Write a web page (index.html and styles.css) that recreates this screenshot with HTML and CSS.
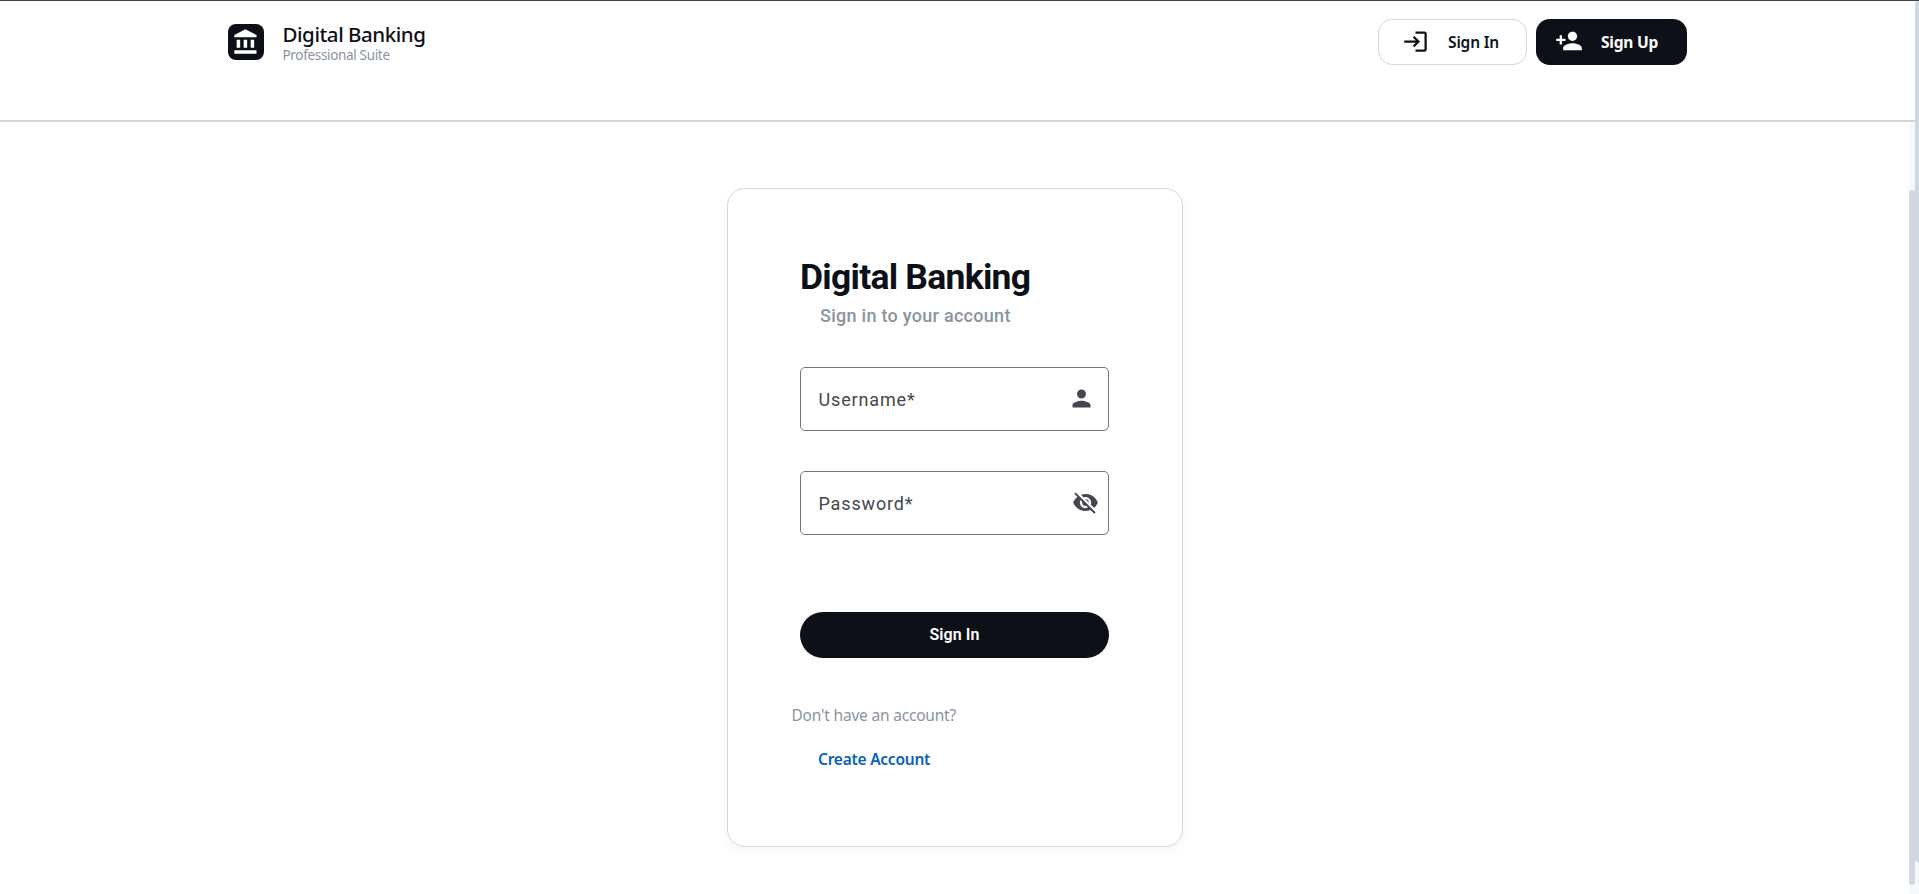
FILE: index.html
```html
<!DOCTYPE html>
<html lang="en">
<head>
<meta charset="utf-8">
<title>Digital Banking</title>
<link rel="stylesheet" href="styles.css">
</head>
<body>
<div class="app">
  <div class="page">
    <header class="header">
      <div class="brand">
        <div class="brand-logo">
          <svg viewBox="0 0 24 24" width="28" height="28"><path d="M4 10v7h3v-7H4zm6 0v7h3v-7h-3zM2 22h19v-3H2v3zm14-12v7h3v-7h-3zm-4.500-9L2 6v2h19V6l-9.500-5z"/></svg>
        </div>
        <div class="brand-text">
          <span class="brand-name">Digital Banking</span>
          <span class="brand-sub">Professional Suite</span>
        </div>
      </div>
      <nav class="actions">
        <button class="btn btn-outline">
          <svg viewBox="0 0 24 24" width="27" height="27"><path d="M11 7 9.6 8.4l2.6 2.6H2v2h10.2l-2.6 2.6L11 17l5-5-5-5zm9 12h-8v2h8c1.1 0 2-.9 2-2V5c0-1.100-.9-2-2-2h-8v2h8v14z"/></svg>
          <span class="in-label">Sign In</span>
        </button>
        <button class="btn btn-dark">
          <svg viewBox="0 0 24 24" width="28" height="28"><path d="M15 12c2.21 0 4-1.79 4-4s-1.79-4-4-4-4 1.79-4 4 1.79 4 4 4zm-9-2V7H4v3H1v2h3v3h2v-3h3v-2H6zm9 4c-2.67 0-8 1.34-8 4v2h16v-2c0-2.66-5.33-4-8-4z"/></svg>
          <span class="up-label">Sign Up</span>
        </button>
      </nav>
    </header>
    <div class="body-row">
      <main class="content">
        <section class="card">
          <h1 class="title">Digital Banking</h1>
          <p class="subtitle">Sign in to your account</p>
          <form class="form">
            <div class="field">
              <label class="field-label">Username*</label>
              <svg class="icon-user" viewBox="0 0 24 24" width="27" height="27"><path d="M12 12c2.21 0 4-1.79 4-4s-1.79-4-4-4-4 1.79-4 4 1.79 4 4 4zm0 2c-2.67 0-8 1.34-8 4v2h16v-2c0-2.66-5.33-4-8-4z"/></svg>
            </div>
            <div class="field">
              <label class="field-label">Password*</label>
              <svg class="icon-eye" viewBox="0 0 24 24" width="27" height="27"><path d="M12 7c2.76 0 5 2.24 5 5 0 .65-.13 1.26-.36 1.83l2.92 2.92c1.51-1.26 2.7-2.89 3.43-4.75-1.73-4.39-6-7.5-11-7.5-1.4 0-2.74.25-3.98.7l2.16 2.16C10.74 7.13 11.35 7 12 7zM2 4.27l2.28 2.28.46.46C3.08 8.3 1.78 10.02 1 12c1.73 4.39 6 7.5 11 7.5 1.55 0 3.03-.3 4.38-.84l.42.42L19.73 22 21 20.73 3.27 3 2 4.27zM7.53 9.8l1.55 1.55c-.05.21-.08.43-.08.65 0 1.66 1.34 3 3 3 .22 0 .44-.03.65-.08l1.55 1.55c-.67.33-1.41.53-2.2.53-2.76 0-5-2.24-5-5 0-.79.2-1.53.53-2.2zm4.31-.78 3.15 3.15.02-.16c0-1.66-1.34-3-3-3l-.17.01z"/></svg>
            </div>
            <button class="submit" type="button">Sign In</button>
          </form>
          <p class="prompt">Don't have an account?</p>
          <a class="create">Create Account</a>
        </section>
      </main>
      <div class="track inner-track"><div class="inner-thumb"></div></div>
    </div>
  </div>
  <div class="track outer-track"><div class="outer-thumb"></div></div>
</div>
</body>
</html>
```
FILE: styles.css
```css
* { box-sizing: border-box; }
body { margin: 0; background: #fff; font-family: "Noto Sans", sans-serif; color: #0d1117; }
h1, p { margin: 0; }
svg { display: block; fill: currentColor; flex: none; }
button { font-family: inherit; margin: 0; padding: 0; border: 0; }
span, label, h1, p, a { white-space: nowrap; }
.app { display: flex; height: 894px; border-top: 1px solid #444446; overflow: hidden; }
.page { flex: 1; display: flex; flex-direction: column; }
.header { height: 121px; padding: 18px 228px 0; border-bottom: 2px solid #ced5df; display: flex; justify-content: space-between; align-items: flex-start; }
.brand { display: flex; gap: 18.5px; padding-top: 5px; }
.brand-logo { width: 36px; height: 36px; border-radius: 8px; background: #0d1117; color: #fff; display: grid; place-items: center; }
.brand-text { display: flex; flex-direction: column; margin-top: -2px; }
.brand-name { font-size: 20.5px; line-height: 24px; font-weight: 500; letter-spacing: -0.45px; }
.brand-sub { font-size: 13.5px; line-height: 19px; color: #8b949e; letter-spacing: -0.33px; }
.actions { display: flex; gap: 9px; }
.btn { height: 46px; border-radius: 14px; display: flex; align-items: center; font-size: 15.5px; font-weight: 600; }
.btn-outline { width: 149px; padding-left: 23px; gap: 19px; background: #fff; color: #0d1117; border: 1px solid #d0d7de; letter-spacing: -0.15px; }
.btn-dark { width: 151px; padding-left: 19px; gap: 18px; background: #0d1117; color: #fff; font-weight: 700; letter-spacing: -0.2px; }
.btn svg { margin-bottom: 2px; }
.body-row { flex: 1; display: flex; }
.content { flex: 1; padding: 66px 0 0 727px; }
.card { width: 456px; height: 659px; padding: 68px 73px 0 72px; border: 1px solid #d0d7de; border-radius: 18px; background: #fff; box-shadow: 0 4px 12px rgba(0,0,0,.04); }
.title { font: 700 35.5px/40px Roboto, sans-serif; letter-spacing: -0.75px; }
.subtitle { font: 500 18px/24px Roboto, sans-serif; color: #8b949e; letter-spacing: 0.28px; padding-left: 20px; margin-top: 7px; }
.form { margin-top: 39px; display: flex; flex-direction: column; }
.field { height: 64px; border: 1px solid #74777f; border-radius: 5px; display: flex; align-items: center; justify-content: space-between; padding-left: 17.5px; margin-bottom: 40px; font: 400 18px/24px Roboto, sans-serif; color: #44474e; letter-spacing: 0.85px; }
.field-label { padding-top: 2px; }
.field svg { margin-bottom: 1px; }
.icon-user { margin-right: 13.5px; }
.icon-eye { margin-right: 9px; }
.submit { height: 46px; margin-top: 37px; border-radius: 23px; background: #0d1117; color: #fff; font: 600 16px/46px Roboto, sans-serif; letter-spacing: 0.1px; }
.prompt { font-size: 15.5px; line-height: 24px; color: #8b949e; letter-spacing: -0.2px; margin: 45px 0 0 -8.5px; }
.create { display: block; font-size: 15.5px; line-height: 24px; font-weight: 600; color: #0860bb; letter-spacing: -0.24px; margin: 20px 0 0 18px; }
.track { background: #f6f8fa; }
.inner-track { width: 6px; padding-top: 68px; }
.inner-thumb { height: 695px; border-radius: 3px; background: #d0d7de; }
.outer-track { width: 4px; }
.outer-thumb { height: 861px; border-radius: 3px 0 0 3px; background: #d0d7de; }
```
